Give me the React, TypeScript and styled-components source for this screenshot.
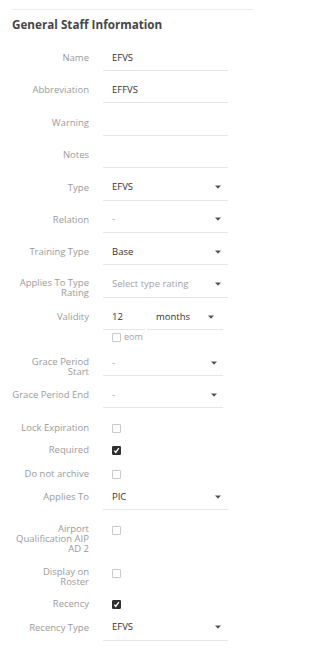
import React from 'react';
import styled, { createGlobalStyle } from 'styled-components';

const GlobalStyle = createGlobalStyle`
  html, body {
    margin: 0;
    padding: 0;
    background: #fff;
  }
  body {
    font-family: "Open Sans", "Liberation Sans", sans-serif;
    -webkit-font-smoothing: antialiased;
  }
`;

type FieldProps = {
  label: string;
  value?: string;
  placeholder?: string;
  select?: boolean;
  narrow?: boolean;
  space?: number;
};

type CheckProps = {
  label: string;
  checked?: boolean;
  space?: number;
};

const Caret = () => (
  <svg width="6" height="4" viewBox="0 0 6 4">
    <path d="M0 0.5h6L3 3.8z" fill="#555" />
  </svg>
);

const Tick = () => (
  <svg width="7" height="7" viewBox="0 0 7 7">
    <path d="M1.3 3.6l1.5 1.7L5.8 1.2" stroke="#fff" strokeWidth="1.4" fill="none" />
  </svg>
);

// labels carry their own line breaks, matching where the form wraps them
const TextField: React.FC<FieldProps> = ({ label, value, placeholder, select, narrow, space = 7.4 }) => (
  <FieldRow $space={space}>
    <Label $top={label.includes('\n') ? 5.5 : 7}>{label}</Label>
    <Control $narrow={narrow}>
      <Value $muted={!value}>{value || placeholder}</Value>
      {select && <Caret />}
    </Control>
  </FieldRow>
);

const CheckField: React.FC<CheckProps> = ({ label, checked, space = 10 }) => (
  <Row $space={space}>
    <Label $top={2}>{label}</Label>
    <CheckCell $top={label.includes('\n') ? 3.5 : 2.5}>
      <Box $checked={checked}>{checked && <Tick />}</Box>
    </CheckCell>
  </Row>
);

const App: React.FC = () => (
  <>
    <GlobalStyle />
    <Panel>
      <Title>General Staff Information</Title>
      <Form>
        <TextField label="Name" value="EFVS" space={0} />
        <TextField label="Abbreviation" value="EFFVS" />
        <TextField label="Warning" />
        <TextField label="Notes" />
        <TextField label="Type" value="EFVS" select />
        <TextField label="Relation" placeholder="-" select />
        <TextField label="Training Type" value="Base" select />
        <TextField label={'Applies To Type\nRating'} placeholder="Select type rating" select />
        <Row $space={7.4}>
          <Label $top={7}>Validity</Label>
          <ValidityCell>
            <Split>
              <Control $grow={false}>
                <Value>12</Value>
              </Control>
              <Control $narrow $unit>
                <Value>months</Value>
                <Caret />
              </Control>
            </Split>
            <Eom>
              <Box />
              <span>eom</span>
            </Eom>
          </ValidityCell>
        </Row>
        <TextField label={'Grace Period\nStart'} placeholder="-" select narrow space={7} />
        <TextField label="Grace Period End" placeholder="-" select narrow space={7} />
        <CheckField label="Lock Expiration" space={13} />
        <CheckField label="Required" checked space={10} />
        <CheckField label="Do not archive" space={12} />
        <TextField label="Applies To" value="PIC" select space={6} />
        <CheckField label={'Airport\nQualification AIP\nAD 2'} space={12} />
        <CheckField label={'Display on\nRoster'} space={11} />
        <CheckField label="Recency" checked space={10} />
        <TextField label="Recency Type" value="EFVS" select space={6.5} />
      </Form>
    </Panel>
  </>
);

export default App;

const Panel = styled.section`
  width: 254px;
  height: 648px;
  padding: 9px 0 0 11px;
  box-sizing: border-box;
  overflow: hidden;
`;

const Title = styled.h2`
  margin: 0 0 0 1px;
  padding: 7px 0 0;
  border-top: 1px solid #ececec;
  height: 28px;
  box-sizing: border-box;
  font-size: 11.7px;
  line-height: 15px;
  font-weight: 700;
  color: #464646;
`;

const Form = styled.div`
  display: flex;
  flex-direction: column;
  padding-top: 9px;
`;

const Row = styled.div<{ $space: number }>`
  display: flex;
  align-items: flex-start;
  margin-top: ${(p) => p.$space}px;
`;

const FieldRow = styled(Row)`
  height: 25px;
`;

const Label = styled.div<{ $top: number }>`
  flex: 0 0 78px;
  padding-top: ${(p) => p.$top}px;
  margin-right: 14px;
  text-align: right;
  white-space: pre-line;
  font-size: 9.5px;
  line-height: 10px;
  color: #9b9b9b;
`;

const Control = styled.div<{ $narrow?: boolean; $grow?: boolean; $unit?: boolean }>`
  display: flex;
  align-items: center;
  justify-content: space-between;
  box-sizing: border-box;
  width: ${(p) => (p.$grow === false ? '42px' : p.$narrow ? '120px' : '125px')};
  flex: ${(p) => (p.$unit ? '1 1 auto' : '0 0 auto')};
  height: 25px;
  padding: 0 ${(p) => (p.$unit ? 9 : p.$narrow ? 6 : 7)}px 1px 9px;
  border-bottom: 1px solid #e6e6e6;
`;

const Value = styled.span<{ $muted?: boolean }>`
  font-size: 9.5px;
  line-height: 12px;
  color: ${(p) => (p.$muted ? '#a2a2a2' : '#333')};
`;

const ValidityCell = styled.div`
  display: flex;
  flex-direction: column;
  width: 120px;
`;

const Split = styled.div`
  display: flex;
  gap: 2px;
`;

const Eom = styled.label`
  display: flex;
  align-items: center;
  gap: 3px;
  height: 14px;
  padding-left: 9px;
  font-size: 9px;
  line-height: 10px;
  color: #a2a2a2;
`;

const CheckCell = styled.div<{ $top: number }>`
  display: flex;
  padding: ${(p) => p.$top}px 0 0 9px;
`;

const Box = styled.span<{ $checked?: boolean }>`
  display: inline-flex;
  align-items: center;
  justify-content: center;
  width: 9px;
  height: 9px;
  box-sizing: border-box;
  border-radius: 1px;
  border: 1px solid ${(p) => (p.$checked ? '#2f2f2f' : '#c9c9c9')};
  background: ${(p) => (p.$checked ? '#2f2f2f' : '#fff')};
`;
